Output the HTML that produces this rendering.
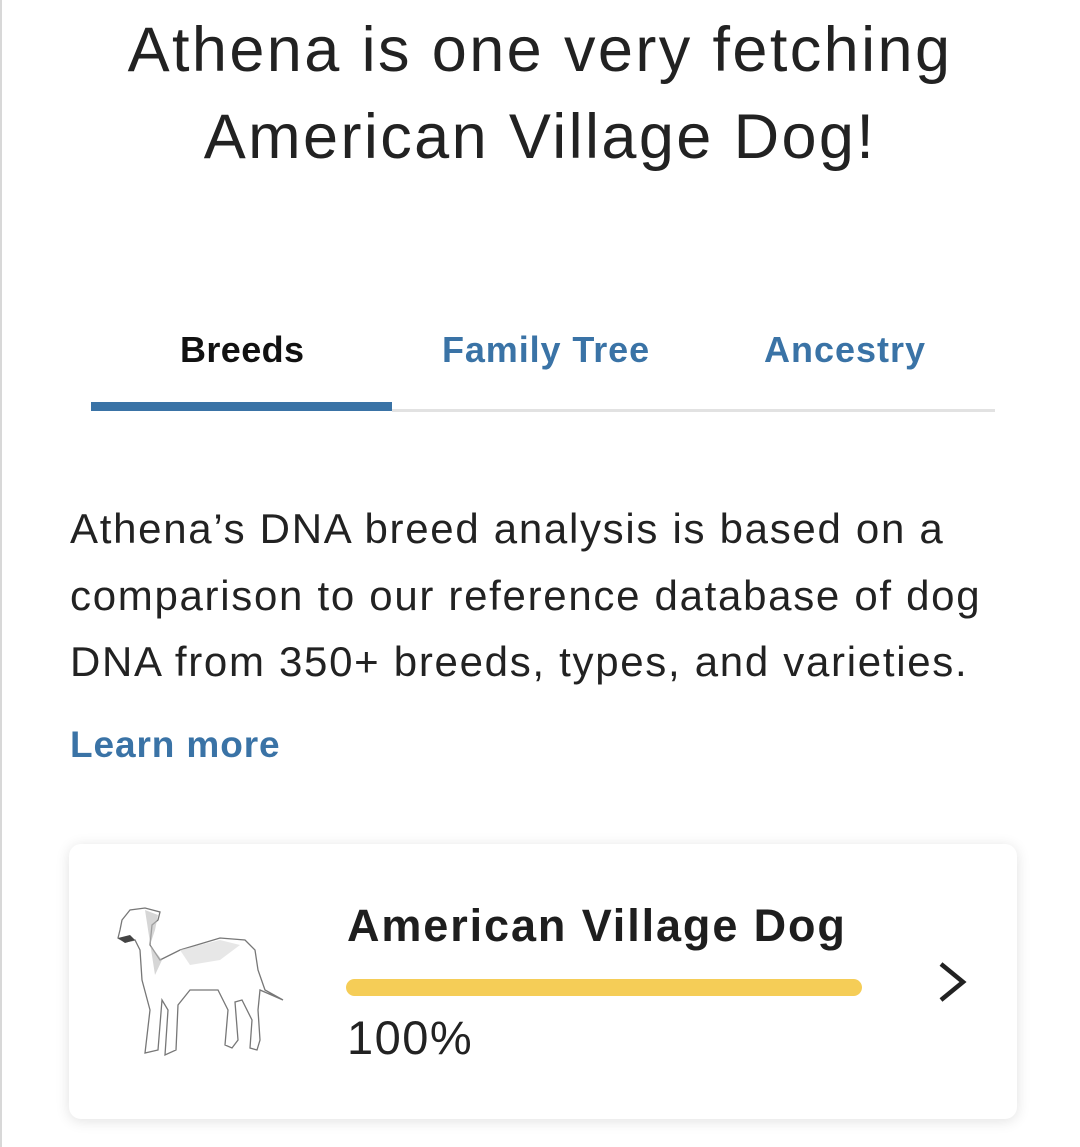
<!DOCTYPE html>
<html><head><meta charset="utf-8"><style>
body{margin:0;width:1080px;height:1147px;background:#fff;position:relative;overflow:hidden;font-family:"Liberation Sans",sans-serif;color:#222}
.lb{position:absolute;left:0;top:0;width:2px;height:1147px;background:#d8d8d8}
.t{position:absolute;white-space:nowrap}
h1{position:absolute;left:0;width:1080px;text-align:center;margin:0;font-weight:400;font-size:63px;line-height:87px;top:7px;color:#222;letter-spacing:2.4px}
.tab{position:absolute;top:329px;font-size:36px;font-weight:700;color:#3a73a6;letter-spacing:0.6px}
.p{left:70px;font-size:42px;color:#222;letter-spacing:1.7px}
.card{position:absolute;left:69px;top:844px;width:948px;height:275px;border-radius:12px;background:#fff;box-shadow:0 2px 14px rgba(0,0,0,0.12)}
</style></head><body>
<div class="lb"></div>
<h1>Athena is one very fetching<br>American Village Dog!</h1>
<div class="tab" style="left:180px;color:#111;letter-spacing:0.4px">Breeds</div>
<div class="tab" style="left:442px;letter-spacing:0.9px">Family Tree</div>
<div class="tab" style="left:764px;letter-spacing:1px">Ancestry</div>
<div style="position:absolute;left:392px;top:409px;width:603px;height:3px;background:#e2e2e2"></div>
<div style="position:absolute;left:91px;top:402px;width:301px;height:9px;background:#3a73a6"></div>
<div class="t p" style="top:505px">Athena’s DNA breed analysis is based on a</div>
<div class="t p" style="top:572px">comparison to our reference database of dog</div>
<div class="t p" style="top:638px">DNA from 350+ breeds, types, and varieties.</div>
<div class="t" style="left:70px;top:724px;font-size:37px;font-weight:700;color:#3a73a6;letter-spacing:0.9px">Learn more</div>
<div class="card"></div>
<svg style="position:absolute;left:100px;top:890px" width="200" height="180" viewBox="0 0 200 180">
<g fill="none" stroke="#777" stroke-width="1.3">
<path d="M22 30 L30 20 L45 18 L60 22 L58 30 L52 35 L50 55 L60 70 L80 60 L120 48 L145 50 L155 60 L158 80 L165 100 L183 110 L160 100 L158 120 L160 150 L157 160 L150 158 L152 130 L142 110 L135 112 L138 150 L132 158 L125 155 L128 120 L118 100 L90 100 L78 115 L76 160 L65 165 L68 120 L62 110 L58 160 L45 163 L50 120 L42 90 L40 60 L35 50 L25 52 L18 48 L20 40 Z"/>
</g>
<path d="M18 48 L30 45 L35 50 L25 53 Z" fill="#444"/>
<path d="M45 20 L58 25 L55 40 L50 55 L62 70 L55 85 Z" fill="#bbb" opacity=".6"/>
<path d="M80 60 L120 50 L140 55 L120 70 L90 75 Z" fill="#ddd" opacity=".7"/>
</svg>
<div class="t" style="left:347px;top:900px;font-size:45px;font-weight:700;color:#1e1e1e;letter-spacing:1.9px">American Village Dog</div>
<div style="position:absolute;left:346px;top:979px;width:516px;height:17px;border-radius:9px;background:#f5cd57"></div>
<div class="t" style="left:347px;top:1010px;font-size:47px;color:#222;letter-spacing:1.5px">100%</div>
<svg style="position:absolute;left:935px;top:960px" width="36" height="44" viewBox="0 0 36 44"><path d="M6 4 L28 22 L6 40" fill="none" stroke="#222" stroke-width="4.5"/></svg>
</body></html>
